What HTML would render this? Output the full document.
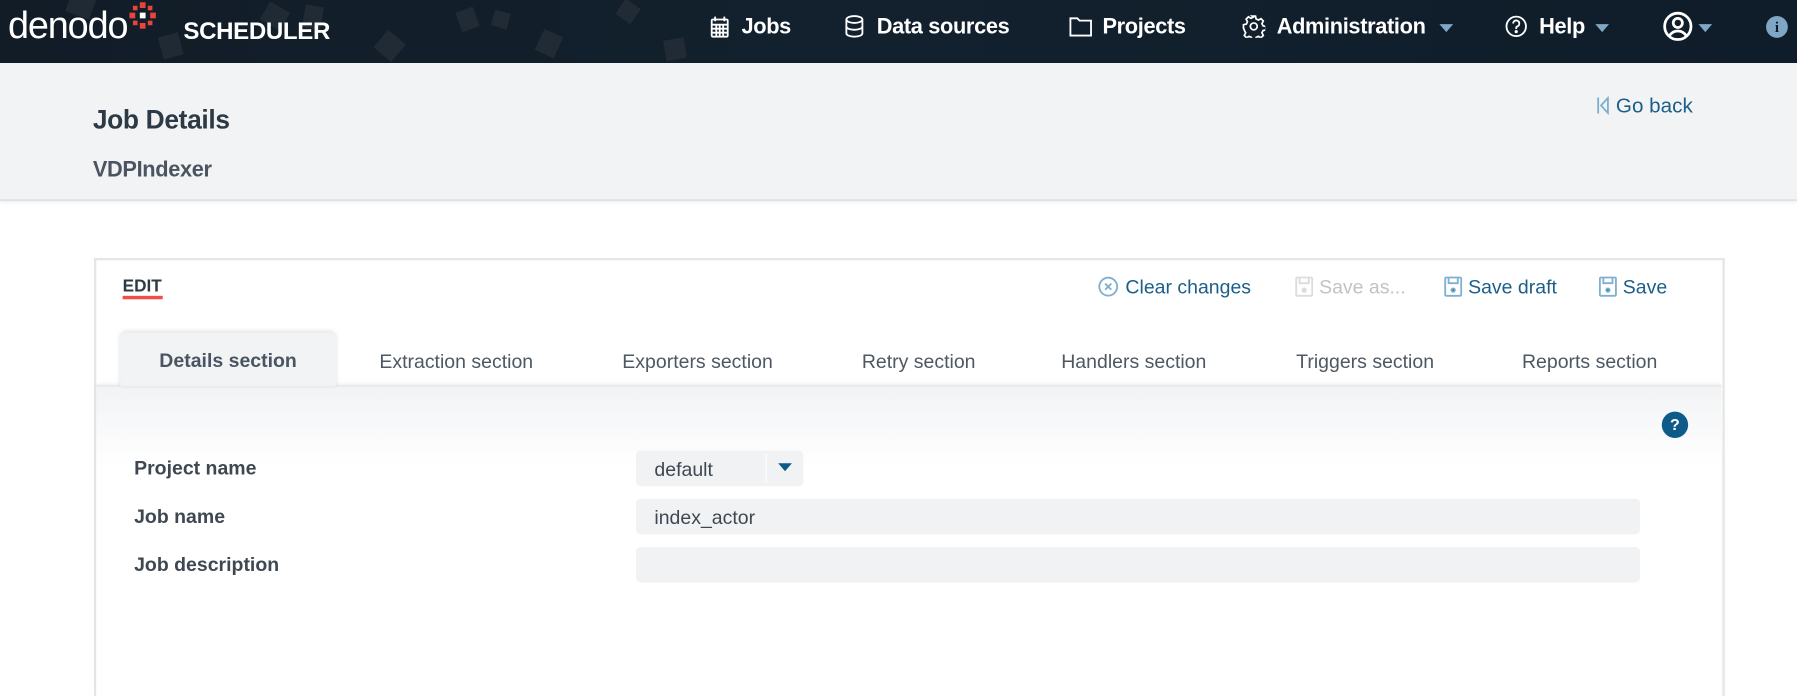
<!DOCTYPE html>
<html><head><meta charset="utf-8">
<style>
html,body{margin:0;padding:0;width:1797px;height:688px;overflow:hidden;background:#fff}
#w{position:absolute;left:0;top:0;width:1568px;height:600px;transform:scale(1.14605,1.14667);transform-origin:0 0;font-family:"Liberation Sans",sans-serif}
.a{position:absolute;white-space:nowrap}
.nav{position:absolute;left:0;top:0;width:1568px;height:55px;background:linear-gradient(90deg,#111c27,#13212e 50%,#0f1c29);overflow:hidden}
.sq{position:absolute;background:#26313b;opacity:.7}
.ni{color:#fff;font-size:19px;font-weight:bold;top:13px;letter-spacing:-.3px}
.car{position:absolute;width:0;height:0;border-left:6px solid transparent;border-right:6px solid transparent;border-top:7px solid #7fa6c4}
.hdr{position:absolute;left:0;top:55px;width:1568px;height:119px;background:#f2f3f5;border-bottom:1px solid #d6d6d6;box-shadow:0 2px 3px rgba(0,0,0,.06)}
.card{position:absolute;left:82px;top:225px;width:1419px;height:380px;border:2px solid #e6e6e6;border-bottom:none;background:#fff}
.act{color:#1b5e8a;font-size:17px;top:241px}
.tab{color:#4d5862;font-size:17px;top:306px}
.lbl{color:#3f4852;font-size:17px;font-weight:600}
.inp{position:absolute;background:#f1f2f4;border-radius:4px;height:31px}
</style></head><body><div id="w">
<div class="nav">
 <div class="sq" style="left:60px;top:-8px;width:22px;height:22px;transform:rotate(20deg)"></div>
 <div class="sq" style="left:140px;top:30px;width:18px;height:20px;transform:rotate(-15deg)"></div>
 <div class="sq" style="left:230px;top:5px;width:20px;height:18px;transform:rotate(30deg)"></div>
 <div class="sq" style="left:265px;top:5px;width:16px;height:20px;transform:rotate(10deg)"></div>
 <div class="sq" style="left:330px;top:30px;width:20px;height:20px;transform:rotate(40deg)"></div>
 <div class="sq" style="left:400px;top:8px;width:16px;height:18px;transform:rotate(-20deg)"></div>
 <div class="sq" style="left:470px;top:28px;width:18px;height:20px;transform:rotate(25deg)"></div>
 <div class="sq" style="left:540px;top:2px;width:16px;height:16px;transform:rotate(35deg)"></div>
 <div class="sq" style="left:580px;top:34px;width:18px;height:18px;transform:rotate(-10deg)"></div>
 <div class="sq" style="left:430px;top:10px;width:14px;height:14px;transform:rotate(15deg)"></div>
 <span class="a" style="left:7px;top:3px;color:#fff;font-size:33px;letter-spacing:-1px">denodo</span>
 <svg class="a" style="left:112px;top:1px" width="26" height="26" viewBox="0 0 26 26"><g fill="#e8443b"><rect x="10" y="1" width="5" height="5"/><rect x="10" y="19" width="5" height="5"/><rect x="1" y="10" width="5" height="5"/><rect x="19" y="10" width="5" height="5"/><rect x="4" y="4" width="4" height="4"/><rect x="17" y="4" width="4" height="4"/><rect x="4" y="17" width="4" height="4"/><rect x="17" y="17" width="4" height="4"/></g><rect x="10" y="10" width="5" height="5" fill="#fff"/></svg>
 <span class="a" style="left:160px;top:16px;color:#fff;font-size:21px;font-weight:bold;letter-spacing:-.3px">SCHEDULER</span>
 <svg class="a" style="left:620px;top:14px" width="16" height="19" viewBox="0 0 16 19" fill="none" stroke="#fff" stroke-width="1.6"><rect x="1" y="3" width="14" height="15" rx="1"/><path d="M1 7.5h14M1 11h14M1 14.5h14M5 7v11M8 7v11M11 7v11M4 0.5v4M12 0.5v4"/></svg>
 <span class="a ni" style="left:647px">Jobs</span>
 <svg class="a" style="left:737px;top:13px" width="17" height="20" viewBox="0 0 17 20" fill="none" stroke="#fff" stroke-width="1.6"><ellipse cx="8.5" cy="4" rx="7" ry="3"/><path d="M1.5 4v12c0 1.7 3 3 7 3s7-1.3 7-3V4M1.5 10c0 1.7 3 3 7 3s7-1.3 7-3"/></svg>
 <span class="a ni" style="left:765px">Data sources</span>
 <svg class="a" style="left:933px;top:14px" width="20" height="18" viewBox="0 0 20 18" fill="none" stroke="#fff" stroke-width="1.6"><path d="M1 2h6l2 2h10v13H1z"/></svg>
 <span class="a ni" style="left:962px">Projects</span>
 <svg class="a" style="left:1084px;top:13px" width="20" height="20" viewBox="0 0 20 20" fill="none" stroke="#fff" stroke-width="1.5"><circle cx="10" cy="10" r="3"/><path d="M8.5 1h3l.5 2.5 2 1 2.3-1.2 2 2-1.2 2.3 1 2 2.5.5v3l-2.5.5-1 2 1.2 2.3-2 2-2.3-1.2-2 1-.5 2.5h-3l-.5-2.5-2-1-2.3 1.2-2-2 1.2-2.3-1-2L1 11.5v-3l2.5-.5 1-2-1.2-2.3 2-2 2.3 1.2 2-1z"/></svg>
 <span class="a ni" style="left:1114px">Administration</span>
 <div class="car" style="left:1256px;top:21px"></div>
 <svg class="a" style="left:1313px;top:13px" width="20" height="20" viewBox="0 0 20 20" fill="none" stroke="#fff" stroke-width="1.6"><circle cx="10" cy="10" r="8.5"/><path d="M7.3 7.5a2.7 2.7 0 1 1 3.5 2.6c-.6.3-.8.7-.8 1.4v.8"/><circle cx="10" cy="14.6" r=".6" fill="#fff"/></svg>
 <span class="a ni" style="left:1343px">Help</span>
 <div class="car" style="left:1392px;top:21px"></div>
 <svg class="a" style="left:1451px;top:10px" width="26" height="26" viewBox="0 0 26 26" fill="none" stroke="#fff" stroke-width="2.4"><circle cx="13" cy="13" r="11.5"/><circle cx="13" cy="10" r="4"/><path d="M5.5 21.5c2-3.5 4.5-4.5 7.5-4.5s5.5 1 7.5 4.5"/></svg>
 <div class="car" style="left:1482px;top:21px"></div>
 <div class="a" style="left:1541px;top:14px;width:19px;height:19px;border-radius:50%;background:#7fa6c4;color:#0f1c28;font-size:13px;font-weight:bold;text-align:center;line-height:19px;font-family:'Liberation Serif',serif">i</div>
</div>
<div class="hdr"></div>
<span class="a" style="left:81px;top:91px;font-size:23px;font-weight:bold;color:#2d3a45;letter-spacing:-.3px">Job Details</span>
<span class="a" style="left:81px;top:138px;font-size:19px;font-weight:bold;color:#4a5561;letter-spacing:-.3px">VDPIndexer</span>
<svg class="a" style="left:1393px;top:84px" width="12" height="16" viewBox="0 0 12 16" fill="none" stroke="#7fb0cf" stroke-width="1.6"><path d="M1.5 1v14M10 1.5L4 8l6 6.5z"/></svg>
<span class="a" style="left:1410px;top:82px;font-size:18px;color:#1b5e8a">Go back</span>

<div class="card"></div>
<span class="a" style="left:107px;top:241px;font-size:15px;font-weight:bold;color:#2d3a45">EDIT</span>
<div class="a" style="left:107px;top:258px;width:35px;height:3px;background:#ef5043"></div>

<svg class="a" style="left:958px;top:241px" width="18" height="18" viewBox="0 0 18 18" fill="none" stroke="#7fb0cf" stroke-width="1.6"><circle cx="9" cy="9" r="7.8"/><path d="M6.3 6.3l5.4 5.4M11.7 6.3l-5.4 5.4"/></svg>
<span class="a act" style="left:982px">Clear changes</span>
<svg class="a" style="left:1130px;top:241px" width="16" height="18" viewBox="0 0 16 18" fill="none" stroke="#dcdcdc" stroke-width="1.6"><rect x="1" y="1" width="14" height="16" rx="1"/><path d="M4 1v5h8V1"/><circle cx="8" cy="12" r="1.5" fill="#dcdcdc"/></svg>
<span class="a act" style="left:1151px;color:#bfc3c7">Save as...</span>
<svg class="a" style="left:1260px;top:241px" width="16" height="18" viewBox="0 0 16 18" fill="none" stroke="#7fb0cf" stroke-width="1.6"><rect x="1" y="1" width="14" height="16" rx="1"/><path d="M4 1v5h8V1"/><circle cx="8" cy="12" r="1.5" fill="#1b5e8a"/></svg>
<span class="a act" style="left:1281px">Save draft</span>
<svg class="a" style="left:1395px;top:241px" width="16" height="18" viewBox="0 0 16 18" fill="none" stroke="#7fb0cf" stroke-width="1.6"><rect x="1" y="1" width="14" height="16" rx="1"/><path d="M4 1v5h8V1"/><circle cx="8" cy="12" r="1.5" fill="#1b5e8a"/></svg>
<span class="a act" style="left:1416px">Save</span>

<div class="a" style="left:84px;top:336px;width:1418px;height:270px;background:linear-gradient(#f2f3f5,#fff 70px);border-top:1px solid #e2e2e2;box-shadow:0 -2px 3px rgba(0,0,0,.05)"></div>
<div class="a" style="left:105px;top:290px;width:188px;height:47px;background:#f2f3f5;border-radius:6px 6px 0 0;box-shadow:0 -1px 4px rgba(0,0,0,.12)"></div>
<span class="a tab" style="left:139px;top:305px;font-weight:bold;color:#4a5561">Details section</span>
<span class="a tab" style="left:331px">Extraction section</span>
<span class="a tab" style="left:543px">Exporters section</span>
<span class="a tab" style="left:752px">Retry section</span>
<span class="a tab" style="left:926px">Handlers section</span>
<span class="a tab" style="left:1131px">Triggers section</span>
<span class="a tab" style="left:1328px">Reports section</span>

<div class="a" style="left:1450px;top:359px;width:23px;height:23px;border-radius:50%;background:#0e5b8a;color:#fff;font-size:14px;font-weight:bold;text-align:center;line-height:23px">?</div>

<span class="a lbl" style="left:117px;top:399px">Project name</span>
<span class="a lbl" style="left:117px;top:441px">Job name</span>
<span class="a lbl" style="left:117px;top:483px">Job description</span>

<div class="inp" style="left:555px;top:393px;width:146px"></div>
<div class="a" style="left:668px;top:396px;width:1px;height:25px;background:#fff"></div>
<span class="a" style="left:571px;top:400px;font-size:17px;color:#3f4852">default</span>
<div class="car" style="left:679px;top:404px;border-top-color:#0e5b8a"></div>
<div class="inp" style="left:555px;top:435px;width:876px"></div>
<span class="a" style="left:571px;top:442px;font-size:17px;color:#3f4852">index_actor</span>
<div class="inp" style="left:555px;top:477px;width:876px"></div>
</div></body></html>
